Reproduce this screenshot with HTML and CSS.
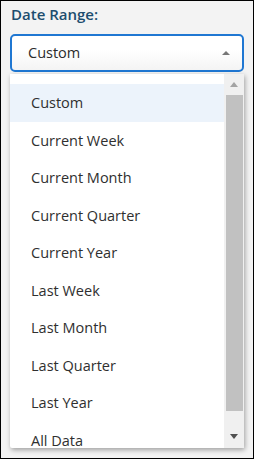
FILE: index.html
```html
<!DOCTYPE html>
<html>
<head>
<meta charset="utf-8">
<link rel="stylesheet" href="styles.css">
</head>
<body>
<div class="frame">
  <div class="label">Date Range:</div>
  <div class="select">
    <span class="select-value">Custom</span>
    <span class="caret-up"></span>
  </div>
  <div class="dropdown">
    <ul class="list">
      <li class="item active">Custom</li>
      <li class="item">Current Week</li>
      <li class="item">Current Month</li>
      <li class="item">Current Quarter</li>
      <li class="item">Current Year</li>
      <li class="item">Last Week</li>
      <li class="item">Last Month</li>
      <li class="item">Last Quarter</li>
      <li class="item">Last Year</li>
      <li class="item">All Data</li>
    </ul>
    <div class="scrollbar">
      <div class="sb-btn"><span class="sb-up"></span></div>
      <div class="sb-track"><div class="sb-thumb"></div></div>
      <div class="sb-btn"><span class="sb-down"></span></div>
    </div>
  </div>
</div>
</body>
</html>
```
FILE: styles.css
```css
html, body {
  margin: 0;
  padding: 0;
}
body {
  font-family: "Open Sans", "Noto Sans", sans-serif;
  width: 254px;
  height: 459px;
  overflow: hidden;
}
.frame {
  box-sizing: border-box;
  width: 254px;
  height: 459px;
  border: 1px solid #000;
  background: #f3f3f3;
  padding: 3px 0 0 9px;
}
.label {
  font-size: 15px;
  line-height: 20px;
  font-weight: 600;
  color: #1d4d6e;
  padding-left: 1px;
  margin-bottom: 10px;
}
.select {
  box-sizing: border-box;
  width: 234px;
  height: 38px;
  border: 2px solid #1f77d2;
  border-radius: 5px;
  background: linear-gradient(#ffffff 40%, #f4f4f4);
  display: flex;
  align-items: center;
  justify-content: space-between;
  padding: 0 12px 0 16px;
}
.select-value {
  font-size: 14.5px;
  color: #2b2b2b;
  line-height: 20px;
}
.caret-up {
  width: 0;
  height: 0;
  border-left: 4px solid transparent;
  border-right: 4px solid transparent;
  border-bottom: 4px solid #777;
  margin-top: -1px;
}
.dropdown {
  margin-top: 2px;
  width: 234px;
  height: 374px;
  background: #fff;
  display: flex;
  box-shadow: 1px 2px 5px rgba(0, 0, 0, 0.35);
  border-radius: 0 0 2px 2px;
}
.list {
  list-style: none;
  margin: 0;
  padding: 10px 0 0 0;
  flex: 1;
  overflow: hidden;
}
.item {
  height: 37.5px;
  line-height: 37.5px;
  padding-left: 21px;
  font-size: 14.5px;
  color: #2f2f2f;
  white-space: nowrap;
}
.item.active {
  background: #ecf3fb;
}
.scrollbar {
  width: 20px;
  background: #f0f0f0;
  display: flex;
  flex-direction: column;
}
.sb-btn {
  height: 21px;
  display: flex;
  align-items: center;
  justify-content: center;
  flex: none;
}
.sb-up {
  width: 0;
  height: 0;
  border-left: 4.5px solid transparent;
  border-right: 4.5px solid transparent;
  border-bottom: 5px solid #a3a3a3;
}
.sb-down {
  width: 0;
  height: 0;
  border-left: 4.5px solid transparent;
  border-right: 4.5px solid transparent;
  border-top: 5px solid #505050;
  margin-top: -2px;
}
.sb-track {
  flex: 1;
  padding: 0 1px 0 2px;
}
.sb-thumb {
  height: 316px;
  background: #c1c1c1;
}
```
